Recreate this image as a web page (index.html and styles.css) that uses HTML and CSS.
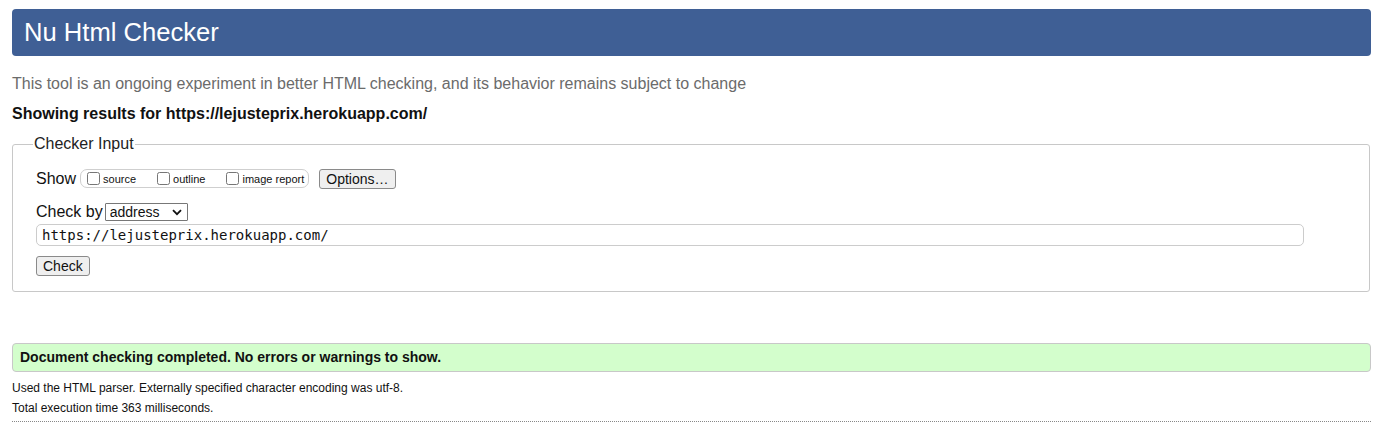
FILE: index.html
```html
<!DOCTYPE html>
<html lang="en">
<head>
<meta charset="utf-8">
<title>Nu Html Checker</title>
<link rel="stylesheet" href="styles.css">
</head>
<body>
<h1 class="title">Nu Html Checker</h1>
<p class="intro">This tool is an ongoing experiment in better HTML checking, and its behavior remains subject to change</p>
<p class="showing">Showing results for https://lejusteprix.herokuapp.com/</p>
<form class="checker">
  <fieldset class="input-set">
    <legend class="legend">Checker Input</legend>
    <div class="row show-row">
      <span class="row-label">Show</span>
      <span class="show-group">
        <label class="opt"><input type="checkbox" class="cb"><span>source</span></label>
        <label class="opt"><input type="checkbox" class="cb"><span>outline</span></label>
        <label class="opt last"><input type="checkbox" class="cb"><span>image report</span></label>
      </span>
      <button type="button" class="btn options">Options…</button>
    </div>
    <div class="row by-row">
      <span class="row-label">Check by</span>
      <span class="select-wrap">
        <select class="select"><option>address</option></select>
        <svg class="chev" width="10" height="7" viewBox="0 0 10 7"><path d="M1 1.2 L5 5.2 L9 1.2" fill="none" stroke="#111" stroke-width="1.8"/></svg>
      </span>
    </div>
    <input class="url" type="text" value="https://lejusteprix.herokuapp.com/">
    <div class="row">
      <button type="button" class="btn check">Check</button>
    </div>
  </fieldset>
</form>
<div class="success">Document checking completed. No errors or warnings to show.</div>
<p class="meta">Used the HTML parser. Externally specified character encoding was utf-8.</p>
<p class="meta">Total execution time 363 milliseconds.</p>
<hr class="dots">
</body>
</html>
```

FILE: styles.css
```css
html, body {
  background: #fff;
}
body {
  margin: 0;
  padding: 9px 9px 0 12px;
  font-family: "Liberation Sans", Arial, sans-serif;
  color: #111;
}
.title {
  margin: 0;
  height: 47px;
  line-height: 47px;
  padding-left: 12px;
  background: #3f5f95;
  color: #fff;
  font-size: 25.6px;
  font-weight: normal;
  border-radius: 4px;
}
.intro {
  margin: 19px 0 0;
  font-size: 16px;
  line-height: 18px;
  color: #6b6b6b;
}
.showing {
  margin: 12px 0 0;
  font-size: 16px;
  line-height: 18px;
  font-weight: bold;
  color: #111;
}
.checker {
  margin: 12px 1px 0 0;
}
.input-set {
  margin: 0;
  border: 1px solid #c8c8c8;
  border-radius: 3px;
  padding: 15px 23px 15px 23px;
}
.legend {
  padding: 0 1px;
  margin-left: -3px;
  font-size: 16px;
  line-height: 18px;
  color: #222;
}
.row {
  display: flex;
  align-items: center;
}
.row-label {
  font-size: 16px;
  color: #111;
}
.show-row {
  height: 21px;
}
.show-group {
  display: inline-flex;
  align-items: center;
  margin-left: 4px;
  height: 19px;
  border: 1px solid #cfcfcf;
  border-radius: 7px;
  padding: 0 4px 0 6px;
  box-sizing: border-box;
}
.opt {
  display: inline-flex;
  align-items: center;
  font-size: 11px;
  color: #111;
  margin-right: 21px;
}
.opt.last {
  margin-right: 0;
}
.cb {
  margin: 0 3px 0 0;
  width: 13px;
  height: 13px;
}
.btn {
  font-family: "Liberation Sans", Arial, sans-serif;
  font-size: 14px;
  color: #111;
  background: #efefef;
  border: 1px solid #8a8a8a;
  border-radius: 3px;
  padding: 0 6px;
  height: 20px;
  line-height: 18px;
}
.options {
  margin-left: 10px;
}
.by-row {
  margin-top: 13px;
  height: 19px;
}
.select-wrap {
  position: relative;
  display: inline-block;
  margin-left: 2px;
}
.select {
  appearance: none;
  -webkit-appearance: none;
  width: 83px;
  height: 18px;
  font-family: "Liberation Sans", Arial, sans-serif;
  font-size: 14px;
  color: #111;
  border: 1px solid #777;
  border-radius: 1px;
  background: #fff;
  padding: 0 0 0 4px;
  line-height: 16px;
  display: block;
}
.chev {
  position: absolute;
  right: 6px;
  top: 6px;
  pointer-events: none;
}
.url {
  display: block;
  margin-top: 3px;
  width: calc(100% - 42px);
  height: 22px;
  box-sizing: border-box;
  border: 1px solid #cccccc;
  border-radius: 5px;
  padding: 0 5px;
  font-family: "DejaVu Sans Mono", "Liberation Mono", monospace;
  font-size: 14px;
  color: #111;
}
.check {
  margin-top: 10px;
}
.success {
  margin-top: 51px;
  height: 29px;
  box-sizing: border-box;
  line-height: 27px;
  background: #d3fecc;
  border: 1px solid #c8c8c8;
  border-radius: 4px;
  padding-left: 7px;
  font-size: 14px;
  font-weight: bold;
  color: #111;
}
.meta {
  margin: 0;
  font-size: 12px;
  line-height: 20px;
  color: #111;
}
.success + .meta {
  margin-top: 6px;
}
.dots {
  margin: 3px 0 0;
  border: 0;
  border-top: 1px dotted #888;
  height: 0;
}
```
